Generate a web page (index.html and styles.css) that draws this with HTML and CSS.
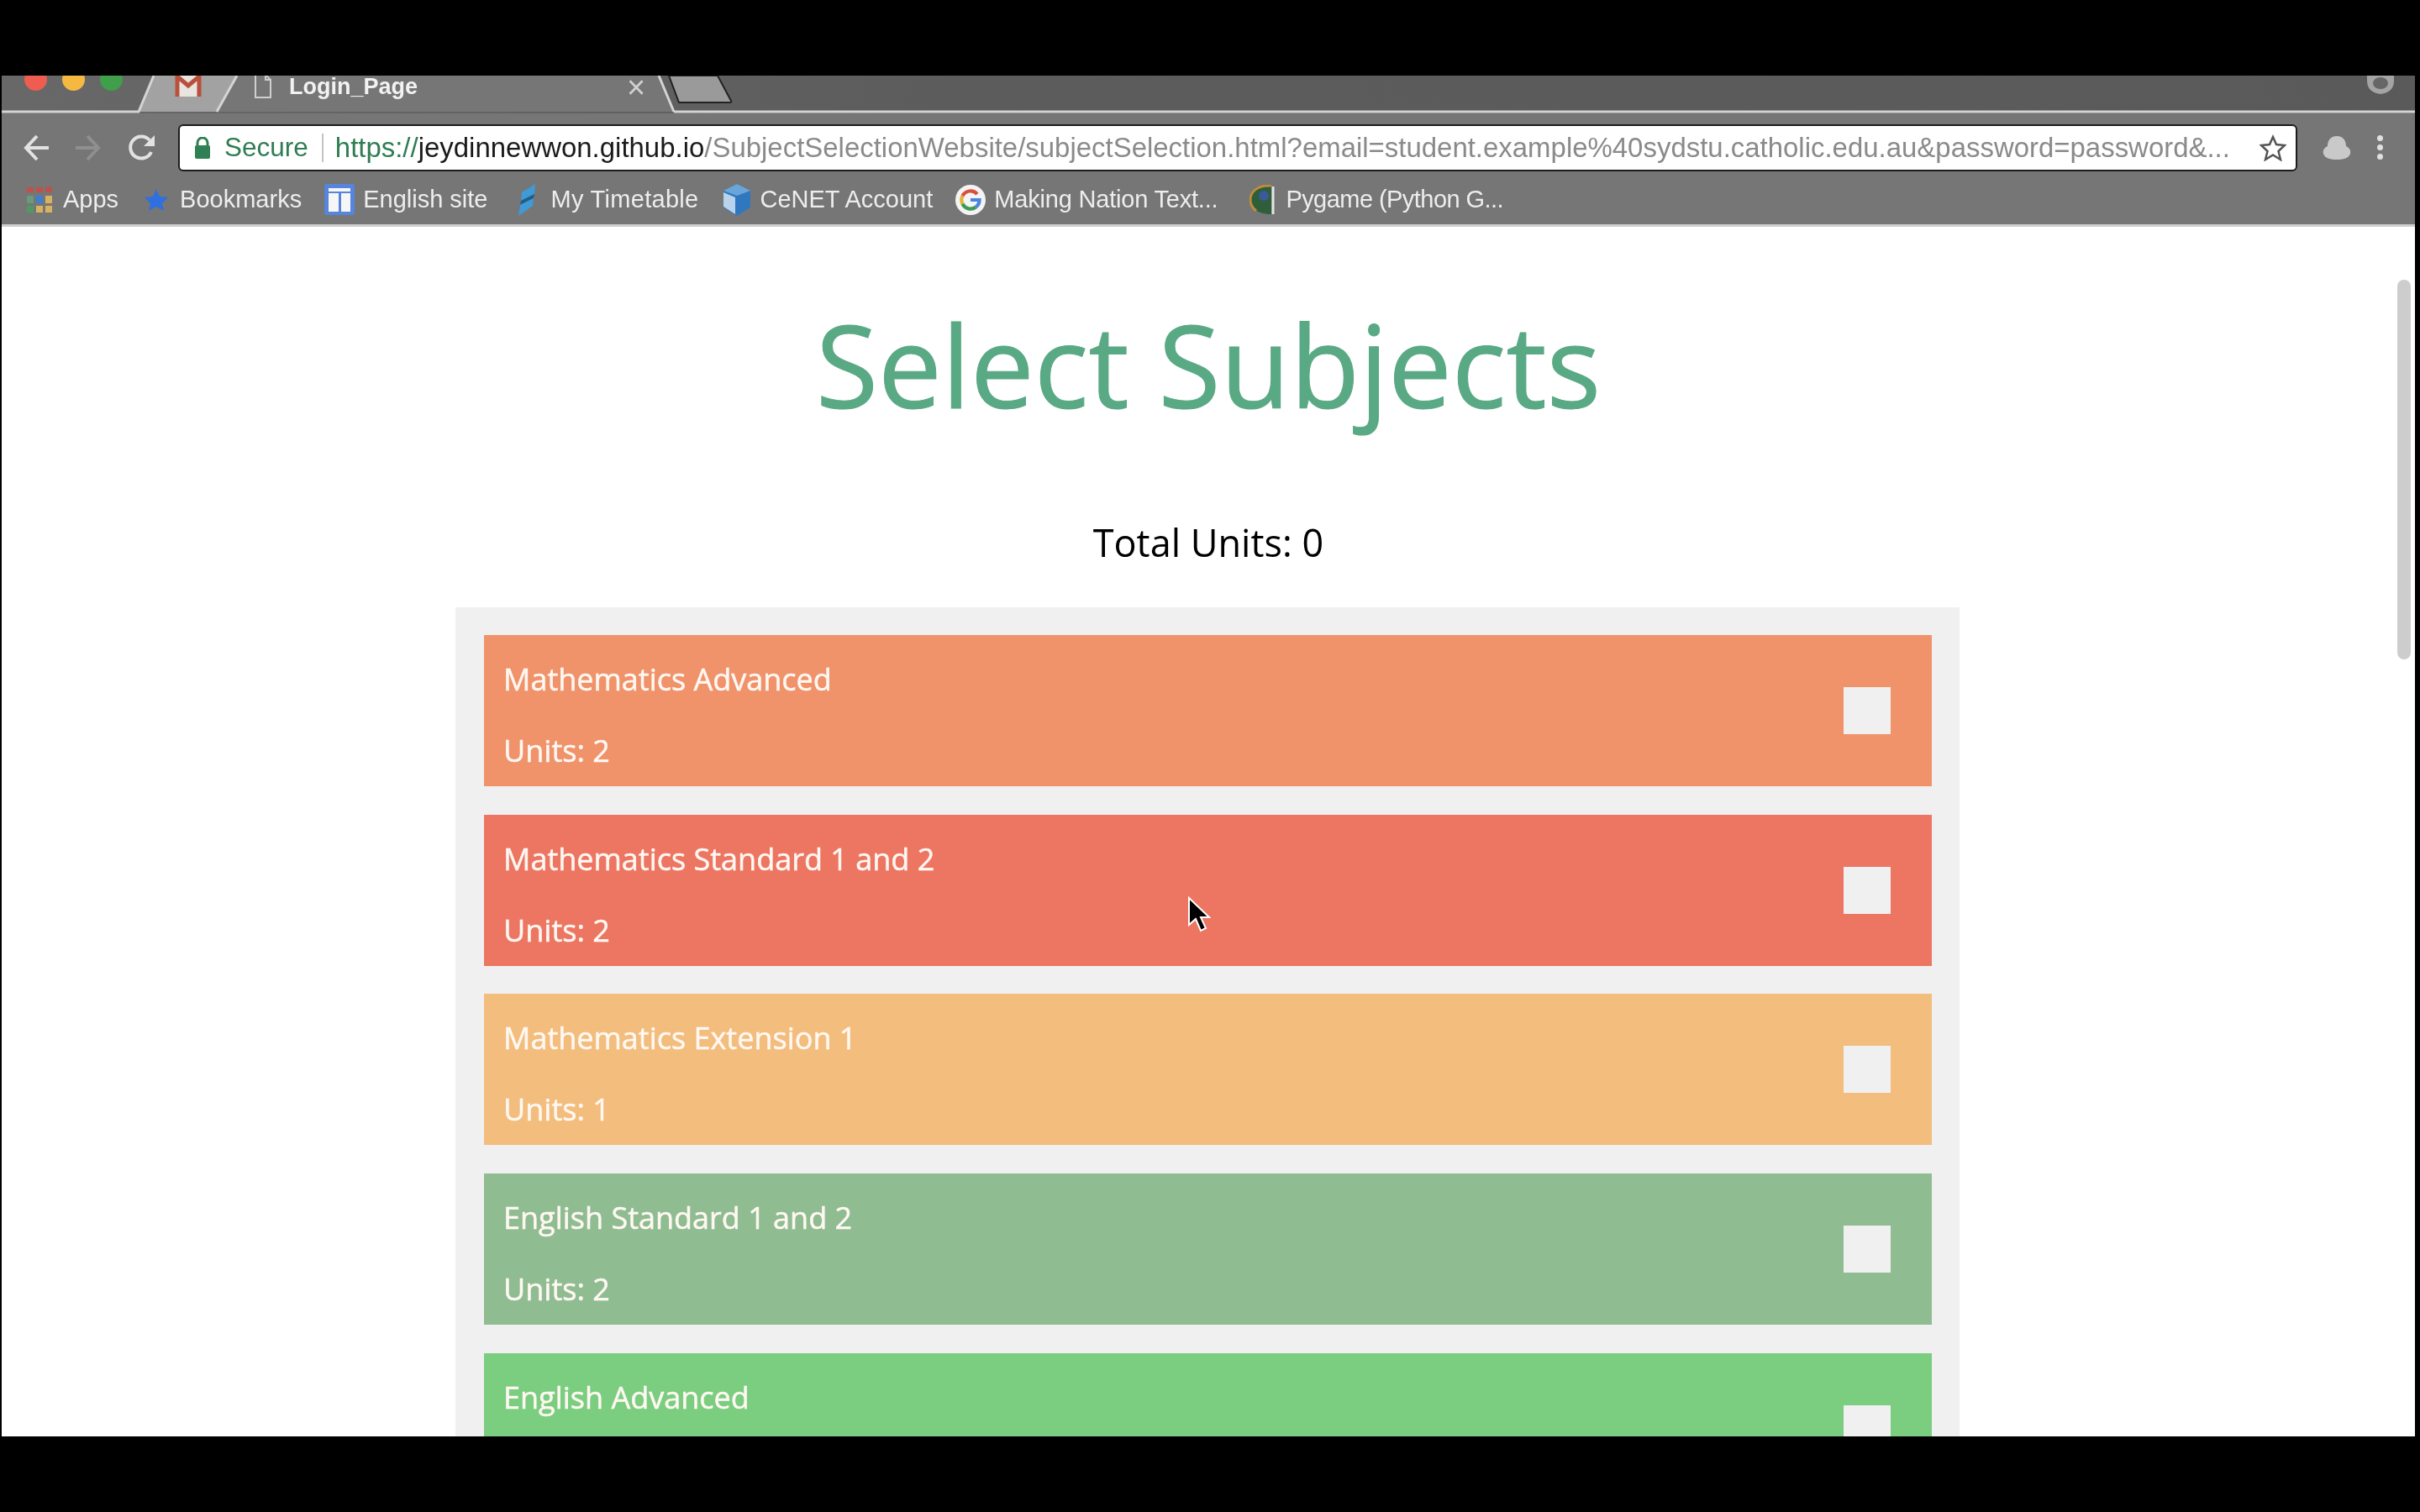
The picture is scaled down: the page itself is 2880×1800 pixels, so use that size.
FILE: index.html
```html
<!DOCTYPE html>
<html>
<head>
  <title>Login_Page</title>
  <link rel="stylesheet" href="styles.css">
</head>
<body>
  <div class="screen">
    <div class="tabstrip">
      <svg class="tab-shapes" width="2872" height="46" viewBox="0 0 2872 46">
        <path d="M163 43 L181 0 H280 L256 43 Z" fill="#a2a2a2"/>
        <path d="M0 43 H163 L181 0 M800 43 H2872" fill="none" stroke="#d4d4d4" stroke-width="3"/>
        <path d="M256 43 L280 0 H782 L800 43 Z" fill="#767676"/>
        <path d="M256 43 L280 0 M782 0 L800 43" fill="none" stroke="#d4d4d4" stroke-width="3"/>
        <path d="M794 0 H852 L868 30 Q869 32 866 32 H806 Z" fill="#9a9a9a" stroke="#222" stroke-width="2"/>
      </svg>
      <div class="lights">
        <span class="light red"></span>
        <span class="light yellow"></span>
        <span class="light green"></span>
      </div>
      <svg class="gmail" width="32" height="30" viewBox="0 0 32 30">
        <rect x="2" y="1" width="28" height="26" fill="#e8e4e0"/>
        <path d="M3 27 V3 L16 14 L29 3 V27" fill="none" stroke="#b9503c" stroke-width="5"/>
      </svg>
      <svg class="page-icon" width="22" height="30" viewBox="0 0 22 30">
        <path d="M2 1 H14 L20 7 V28 H2 Z M14 1 V7 H20" fill="none" stroke="#cfcfcf" stroke-width="2"/>
      </svg>
      <span class="tab-title">Login_Page</span>
      <span class="tab-close">×</span>
      <svg class="incognito" width="34" height="24" viewBox="0 0 34 24">
        <path d="M1 0 H33 V8 Q33 22 17 24 Q1 22 1 8 Z" fill="#a4a4a4"/>
        <ellipse cx="17" cy="11" rx="9" ry="7" fill="#666"/>
      </svg>
    </div>

    <div class="toolbar">
      <svg class="nav-icon back" width="32" height="34" viewBox="0 0 32 34">
        <path d="M30 17 H4 M16 3 L3 17 L16 31" fill="none" stroke="#e2e2e2" stroke-width="4"/>
      </svg>
      <svg class="nav-icon forward" width="32" height="34" viewBox="0 0 32 34">
        <path d="M2 17 H28 M16 3 L29 17 L16 31" fill="none" stroke="#8f8f8f" stroke-width="4"/>
      </svg>
      <svg class="nav-icon reload" width="34" height="34" viewBox="0 0 34 34">
        <path d="M28 22 A13 13 0 1 1 26 8" fill="none" stroke="#e2e2e2" stroke-width="4"/>
        <path d="M32 2 V15 H19 Z" fill="#e2e2e2"/>
      </svg>
      <div class="omnibox">
        <svg class="lock" width="20" height="26" viewBox="0 0 20 26">
          <path d="M4 11 V7 A6 6 0 0 1 16 7 V11" fill="none" stroke="#2f8054" stroke-width="3"/>
          <rect x="1" y="10" width="18" height="16" rx="2" fill="#2f8054"/>
        </svg>
        <span class="secure">Secure</span>
        <span class="omni-sep"></span>
        <span class="url"><span class="url-scheme">https://</span><span class="url-host">jeydinnewwon.github.io</span>/SubjectSelectionWebsite/subjectSelection.html?email=student.example%40sydstu.catholic.edu.au&amp;password=password&amp;...</span>
        <svg class="star" width="32" height="32" viewBox="0 0 32 32">
          <path d="M16 3 L20 12 L30 13 L22.500 20 L25 30 L16 24.500 L7 30 L9.500 20 L2 13 L12 12 Z" fill="none" stroke="#555" stroke-width="2.500"/>
        </svg>
      </div>
      <svg class="ext-icon" width="34" height="28" viewBox="0 0 34 28">
        <path d="M17 0 C25 0 28 6 28 12 C32 14 34 17 33 21 C31 27 24 28 17 28 C10 28 3 27 1 21 C0 17 2 14 6 12 C6 6 9 0 17 0 Z" fill="#c9c9c9"/>
      </svg>
      <div class="menu-dots"><span></span><span></span><span></span></div>
    </div>

    <div class="bookmarks">
      <div class="bm">
        <div class="bm-icon">
          <svg width="32" height="32" viewBox="0 0 32 32">
            <path d="M1 1 H9 V7 H1 Z M12 1 H20 V7 H12 Z M23 1 H31 V7 H23 Z" fill="#c0504a"/>
            <path d="M1 11 H9 V20 H1 Z" fill="#6a9a78"/>
            <path d="M12 11 H20 V20 H12 Z" fill="#3f7fd0"/>
            <path d="M23 11 H31 V20 H23 Z M23 23 H31 V31 H23 Z M12 23 H20 V31 H12 Z" fill="#d9b260"/>
            <path d="M1 23 H9 V31 H1 Z" fill="#4d9a63"/>
          </svg>
        </div>
        <span>Apps</span>
      </div>
      <div class="bm">
        <div class="bm-icon">
          <svg width="30" height="28" viewBox="0 0 28 28">
            <path d="M14 1 L18 10 L28 11 L21 18 L23 27 L14 22 L5 27 L7 18 L0 11 L10 10 Z" fill="#2f6fe0"/>
          </svg>
        </div>
        <span>Bookmarks</span>
      </div>
      <div class="bm">
        <div class="bm-icon">
          <svg width="36" height="37" viewBox="0 0 36 37">
            <rect width="36" height="37" rx="3" fill="#5585dc"/>
            <rect x="5" y="11" width="12" height="22" fill="#f6f6f6"/>
            <rect x="20" y="11" width="11" height="22" fill="#f6f6f6"/>
            <rect x="5" y="5" width="26" height="4" fill="#f6f6f6"/>
          </svg>
        </div>
        <span>English site</span>
      </div>
      <div class="bm timetable">
        <div class="bm-icon">
          <svg width="20" height="38" viewBox="0 0 20 38">
            <path d="M20 0 L19 12 L3 20 L4 10 Z" fill="#3f9ad8"/>
            <path d="M3 20 L19 12 L18 17 L2 25 Z" fill="#1f5f8a"/>
            <path d="M18 17 L17 26 L0 38 L2 25 Z" fill="#3f9ad8"/>
          </svg>
        </div>
        <span>My Timetable</span>
      </div>
      <div class="bm">
        <div class="bm-icon">
          <svg width="32" height="38" viewBox="0 0 32 38">
            <path d="M16 0 L32 8 L32 28 L16 38 L0 28 L0 8 Z" fill="#2f78c0"/>
            <path d="M16 0 L32 8 L16 14 L0 8 Z" fill="#6aa5d8"/>
            <path d="M0 10 L14 16 L14 36 L0 27 Z" fill="#b9d3ec"/>
          </svg>
        </div>
        <span>CeNET Account</span>
      </div>
      <div class="bm making">
        <div class="bm-icon">
          <svg width="36" height="36" viewBox="0 0 34 34">
            <circle cx="17" cy="17" r="17" fill="#f4f4f4"/>
            <path d="M24.500 10.500 A10 10 0 0 0 8 12.500" fill="none" stroke="#d8503f" stroke-width="4"/>
            <path d="M8 12.500 A10 10 0 0 0 8 21.500" fill="none" stroke="#e3b23c" stroke-width="4"/>
            <path d="M8 21.500 A10 10 0 0 0 23 25" fill="none" stroke="#3f9a55" stroke-width="4"/>
            <path d="M23 25 A10 10 0 0 0 27 17 H17" fill="none" stroke="#4a86e0" stroke-width="4"/>
          </svg>
        </div>
        <span>Making Nation Text...</span>
      </div>
      <div class="bm pygame">
        <div class="bm-icon">
          <svg width="30" height="36" viewBox="0 0 30 36">
            <path d="M26 1 C10 0 1 8 1 18 C1 28 10 35 26 35 Z" fill="#2e5e3a"/>
            <path d="M26 1 C10 0 1 8 1 18 C1 24 4 28 8 31" fill="none" stroke="#c08a3c" stroke-width="3"/>
            <circle cx="17" cy="13" r="6" fill="#3a5a9a"/>
            <path d="M28 2 V35" stroke="#e4e4e4" stroke-width="3"/>
          </svg>
        </div>
        <span>Pygame (Python G...</span>
      </div>
    </div>

    <div class="page">
      <h1 class="title">Select Subjects</h1>
      <p class="total">Total Units: 0</p>

      <div class="subjects">
        <div class="subject maths-adv">
          <div class="subject-text">
            <p>Mathematics Advanced</p>
            <p>Units: 2</p>
          </div>
          <span class="tick"></span>
        </div>
        <div class="subject maths-std">
          <div class="subject-text">
            <p>Mathematics Standard 1 and 2</p>
            <p>Units: 2</p>
          </div>
          <span class="tick"></span>
        </div>
        <div class="subject maths-ext">
          <div class="subject-text">
            <p>Mathematics Extension 1</p>
            <p>Units: 1</p>
          </div>
          <span class="tick"></span>
        </div>
        <div class="subject eng-std">
          <div class="subject-text">
            <p>English Standard 1 and 2</p>
            <p>Units: 2</p>
          </div>
          <span class="tick"></span>
        </div>
        <div class="subject eng-adv">
          <div class="subject-text">
            <p>English Advanced</p>
            <p>Units: 2</p>
          </div>
          <span class="tick"></span>
        </div>
      </div>

      <div class="scroll-thumb"></div>
      <svg class="cursor" width="28" height="44" viewBox="0 0 28 44">
        <path d="M2 2 V34 L10 27 L16 41 L22 38 L16 25 L26 25 Z" fill="#000" stroke="#fff" stroke-width="2"/>
      </svg>
    </div>
  </div>
</body>
</html>
```

FILE: styles.css
```css
html, body {
  margin: 0;
  height: 100%;
  background-color: #000;
  overflow: hidden;
}

.screen {
  height: 1620px;
  margin: 90px 6px 0 2px;
  overflow: hidden;
  display: flex;
  flex-direction: column;
  background-color: #fff;
  font-family: "Liberation Sans", Arial, sans-serif;
}

/* the source is a video frame, everything is a little soft */
.tabstrip, .toolbar, .bookmarks, .page {
  filter: blur(0.6px);
}

/* tab strip */
.tabstrip {
  position: relative;
  flex: none;
  height: 45px;
  display: flex;
  align-items: flex-start;
  background: linear-gradient(90deg, #686868, #5c5c5c 40%, #5a5a5a);
}

.tab-shapes {
  position: absolute;
  left: 0;
  top: 0;
}

.lights {
  position: relative;
  display: flex;
  gap: 18px;
  margin: -9px 0 0 27px;
}

.light {
  width: 27px;
  height: 27px;
  border-radius: 50%;
}

.red { background-color: #ef5d50; }
.yellow { background-color: #f5b942; }
.green { background-color: #3f9f4b; }

.gmail {
  position: relative;
  margin: -2px 0 0 62px;
}

.page-icon {
  position: relative;
  margin: -2px 0 0 62px;
}

.tab-title {
  position: relative;
  margin: 0 0 0 20px;
  font-size: 27px;
  font-weight: bold;
  line-height: 26px;
  color: #f2f2f2;
}

.tab-close {
  position: relative;
  margin: 0 0 0 249px;
  font-size: 38px;
  line-height: 28px;
  color: #d0d0d0;
}

.incognito {
  position: absolute;
  right: 24px;
  top: -2px;
}

/* toolbar */
.toolbar {
  flex: none;
  height: 81px;
  display: flex;
  align-items: center;
  background-color: #767676;
}

.nav-icon {
  flex: none;
}

.back {
  margin-left: 26px;
}

.forward {
  margin-left: 28px;
}

.reload {
  margin-left: 32px;
}

.omnibox {
  flex: none;
  width: 2518px;
  height: 52px;
  margin-left: 26px;
  border: 2px solid #1c1c1c;
  border-radius: 6px;
  background-color: #fff;
  display: flex;
  align-items: center;
  font-size: 31.5px;
  white-space: nowrap;
}

.lock {
  margin-left: 17px;
}

.secure {
  margin-left: 16px;
  color: #2f7d52;
}

.omni-sep {
  width: 2px;
  height: 34px;
  margin: 0 14px 0 16px;
  background-color: #c4c4c4;
}

.url {
  flex: 1;
  font-size: 32.95px;
  color: #8a8a8a;
}

.url-scheme { color: #2f7d52; }
.url-host { color: #1a1a1a; }

.star {
  margin-right: 11px;
}

.ext-icon {
  margin-left: 30px;
}

.menu-dots {
  margin-left: 31px;
  display: flex;
  flex-direction: column;
  gap: 4px;
}

.menu-dots span {
  width: 7px;
  height: 7px;
  border-radius: 50%;
  background-color: #e0e0e0;
}

/* bookmarks */
.bookmarks {
  flex: none;
  height: 43px;
  display: flex;
  align-items: center;
  gap: 27px;
  padding: 0 0 8px 27px;
  background-color: #767676;
  border-bottom: 3px solid #cfcfcf;
  font-size: 29px;
  color: #ededed;
}

.bm {
  display: flex;
  align-items: center;
  gap: 10px;
  white-space: nowrap;
}

.bm-icon {
  width: 36px;
  height: 38px;
  display: flex;
  align-items: center;
  justify-content: center;
}

.timetable {
  margin-left: 2px;
  letter-spacing: 0.3px;
}

.making {
  margin-right: 8px;
  letter-spacing: -0.2px;
}

.pygame {
  letter-spacing: -0.55px;
}

/* page */
.page {
  position: relative;
  flex: 1;
  font-family: "Open Sans", sans-serif;
  text-align: center;
}

.title {
  margin: 72px 0 0;
  font-size: 135px;
  font-weight: normal;
  color: #5aa985;
  -webkit-text-stroke: 1px #5aa985;
}

.total {
  margin: 89px 0 47px;
  font-size: 45px;
  color: #000;
}

.subjects {
  width: 1723px;
  margin-left: 540px;
  padding: 33px 33px 33px 34px;
  background-color: #f0f0f0;
  text-align: left;
}

.subject {
  height: 180px;
  margin-bottom: 33.7px;
  display: flex;
  align-items: center;
  justify-content: space-between;
  padding: 0 49px 0 23px;
  color: #fff8f2;
  font-size: 36px;
  -webkit-text-stroke: 0.5px #fff8f2;
}

.subject-text {
  margin-top: 10px;
}

.subject-text p {
  margin: 36px 0;
}

.tick {
  width: 56px;
  height: 56px;
  background-color: #f0f0f0;
}

.maths-adv { background-color: #f0936b; }
.maths-std { background-color: #ed7663; }
.maths-ext { background-color: #f3bd7e; }
.eng-std { background-color: #90bc92; }
.eng-adv { background-color: #7bcd80; }

.scroll-thumb {
  position: absolute;
  right: 5px;
  top: 63px;
  width: 16px;
  height: 452px;
  border-radius: 8px;
  background-color: #cdcdcd;
}

.cursor {
  position: absolute;
  left: 1411px;
  top: 797px;
}
```
